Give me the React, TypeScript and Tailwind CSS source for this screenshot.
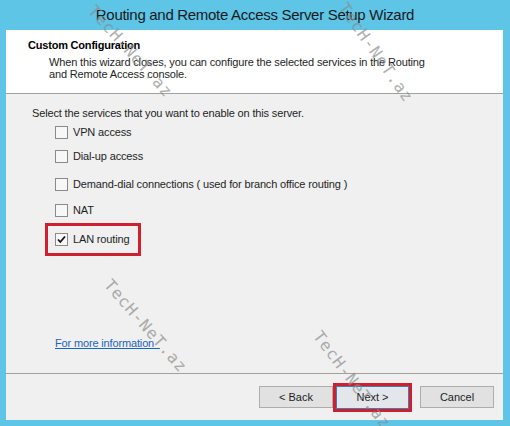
import React from "react";

const font = { fontFamily: '"Liberation Sans", Arial, sans-serif' };

function CheckBox({ checked }: { checked?: boolean }) {
  return (
    <div className="w-[13px] h-[13px] border border-[#8a8a8a] bg-[#f7f7f7] flex items-center justify-center shrink-0">
      {checked && (
        <svg width="9" height="9" viewBox="0 0 9 9">
          <path d="M1 4.5 L3.3 7 L8 1.5" fill="none" stroke="#111" strokeWidth="1.8" />
        </svg>
      )}
    </div>
  );
}

function Row({ label, checked, className = "" }: { label: string; checked?: boolean; className?: string }) {
  return (
    <div className={`flex items-center h-[16px] gap-[5px] ${className}`}>
      <CheckBox checked={checked} />
      <span className="text-[11px] tracking-[-0.15px] text-[#1e1e1e] whitespace-nowrap">{label}</span>
    </div>
  );
}

function Btn({ children }: { children: React.ReactNode }) {
  return (
    <div className="w-[74px] h-[22px] bg-[#e1e1e1] border border-[#adadad] flex items-center justify-center text-[11px] text-[#1e1e1e]">
      {children}
    </div>
  );
}

function Mark({ className }: { className: string }) {
  return (
    <div
      className={`absolute pointer-events-none text-[16px] tracking-[1px] text-[#8c8c8c] opacity-70 whitespace-nowrap origin-top-left ${className}`}
      style={{ fontFamily: '"DejaVu Sans Mono", monospace' }}
    >
      TecH-NeT.az
    </div>
  );
}

export default function App() {
  return (
    <div className="w-[510px] h-[426px] bg-[#5ec5e7] flex flex-col relative overflow-hidden" style={font}>
      <div className="h-[30px] flex items-center justify-center text-[15px] tracking-[-0.3px] text-[#1a1a1a]">
        Routing and Remote Access Server Setup Wizard
      </div>
      <div className="ml-[6px] mr-[7px] mb-[6px] flex-1 bg-[#f0f0f0] flex flex-col">
        <div className="h-[64px] bg-white border-b border-[#a0a0a0] pt-[8px] pl-[22px]">
          <div className="text-[11px] tracking-[-0.2px] font-bold leading-[15px] text-black">Custom Configuration</div>
          <div className="mt-[3px] pl-[21px] text-[11px] tracking-[-0.15px] leading-[12px] text-[#1e1e1e]">
            <div>When this wizard closes, you can configure the selected services in the Routing</div>
            <div>and Remote Access console.</div>
          </div>
        </div>
        <div className="flex-1 pl-[26px] pt-[13px] flex flex-col">
          <div className="text-[11px] tracking-[-0.15px] leading-[12px] text-[#1e1e1e]">
            Select the services that you want to enable on this server.
          </div>
          <div className="pl-[23px] flex flex-col">
            <Row label="VPN access" className="mt-[5px]" />
            <Row label="Dial-up access" className="mt-[8px]" />
            <Row label="Demand-dial connections ( used for branch office routing )" className="mt-[12px]" />
            <Row label="NAT" className="mt-[10px]" />
          </div>
          <div className="mt-[5px] ml-[13px] w-[96px] h-[33px] border-[3px] border-[#cf2030] flex items-center pl-[7px]">
            <Row label="LAN routing" checked />
          </div>
          <div className="mt-[80px] pl-[23px] text-[11px] tracking-[-0.15px] leading-[14px]">
            <span className="text-[#1b64b8] underline">For more information&nbsp;&nbsp;</span>
          </div>
        </div>
        <div className="h-[47px] border-t border-[#a0a0a0] flex items-center justify-end pr-[9px]">
          <Btn>&lt; Back</Btn>
          <div className="border-[3px] border-[#cf2030]">
            <div className="w-[73px] h-[23px] bg-[#e3e6ea] border border-[#3c7fb1] flex items-center justify-center text-[11px] text-[#1e1e1e]">
              Next &gt;
            </div>
          </div>
          <div className="ml-[8px]">
            <Btn>Cancel</Btn>
          </div>
        </div>
      </div>
      <Mark className="left-[100px] top-[0px] rotate-[48deg]" />
      <Mark className="left-[352px] top-[-2px] rotate-[55deg]" />
      <Mark className="left-[116px] top-[274px] rotate-[49deg]" />
      <Mark className="left-[326px] top-[326px] rotate-[53deg]" />
    </div>
  );
}
